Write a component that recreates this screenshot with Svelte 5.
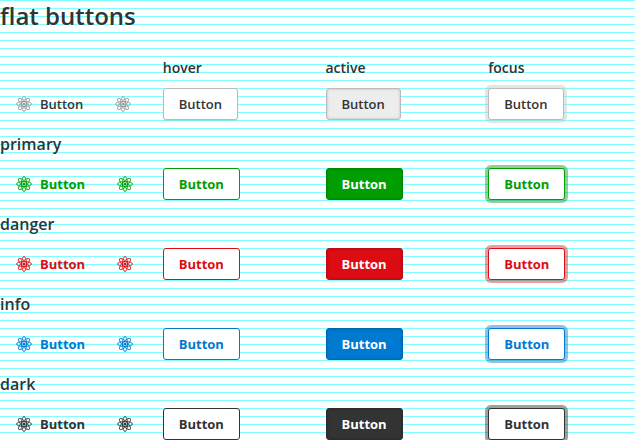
<script>
  const rows = [
    { name: '', kind: 'default' },
    { name: 'primary', kind: 'primary' },
    { name: 'danger', kind: 'danger' },
    { name: 'info', kind: 'info' },
    { name: 'dark', kind: 'dark' },
  ];
  const states = ['hover', 'active', 'focus'];
</script>

{#snippet atom()}
  <svg class="icon" viewBox="0 0 16 16" fill="none" stroke="currentColor" stroke-width="0.9">
    <ellipse cx="8" cy="8" rx="7.5" ry="2.5" />
    <ellipse cx="8" cy="8" rx="7.5" ry="2.5" transform="rotate(90 8 8)" />
    <ellipse cx="8" cy="8" rx="7.5" ry="2.5" transform="rotate(45 8 8)" />
    <ellipse cx="8" cy="8" rx="7.5" ry="2.5" transform="rotate(135 8 8)" />
    <circle cx="8" cy="8" r="1.5" fill="currentColor" stroke="none" />
  </svg>
{/snippet}

<main>
  <h1>flat buttons</h1>
  {#each rows as row}
    {#if row.name}
      <h2>{row.name}</h2>
    {:else}
      <div class="grid heads">
        <span></span>
        {#each states as state}<h3>{state}</h3>{/each}
      </div>
    {/if}
    <div class="grid {row.kind}">
      <div class="pair">
        <button>{@render atom()}<span>Button</span></button>
        <button aria-label="icon">{@render atom()}</button>
      </div>
      {#each states as state}
        <div><button class={state}>Button</button></div>
      {/each}
    </div>
  {/each}
</main>

<style>
  :global(body) {
    overflow: hidden;
  }
  main {
    height: 440px;
    overflow: hidden;
    color: #333;
    font-family: 'Open Sans', 'Noto Sans', sans-serif;
    background: repeating-linear-gradient(to bottom, #7fffff 0, #7fffff 1px, #fff 1px, #fff 8px);
  }
  h1, h2, h3 {
    margin: 0;
    font-weight: 600;
  }
  h1 {
    height: 56px;
    font-size: 24px;
    line-height: 32px;
  }
  h2 {
    height: 32px;
    margin-top: 16px;
    font-size: 16px;
    line-height: 16px;
  }
  h3 {
    font-size: 14px;
    line-height: 24px;
  }
  .grid {
    display: grid;
    grid-template-columns: repeat(4, 162.75px);
    height: 32px;
  }
  .pair {
    display: flex;
  }
  button {
    box-sizing: border-box;
    display: inline-flex;
    align-items: center;
    gap: 8px;
    height: 32px;
    margin: 0;
    padding: 0 15px;
    border: 1px solid transparent;
    border-radius: 3px;
    background: transparent;
    color: var(--c);
    font: 700 13px/30px 'Open Sans', 'Noto Sans', sans-serif;
    vertical-align: top;
  }
  .icon {
    flex: none;
    width: 16px;
    height: 16px;
  }
  .hover, .focus {
    background: #fff;
    border-color: var(--c);
  }
  .focus {
    box-shadow: 0 0 0 3px var(--ring);
  }
  .active {
    background: var(--c);
    border-color: var(--edge);
    color: #fff;
    box-shadow: inset 0 0 3px rgba(0, 0, 0, 0.2);
  }
  .default button {
    color: #333;
    font-weight: 600;
  }
  .default .icon {
    color: #999;
  }
  .default .hover, .default .focus, .default .active {
    border-color: #bbb;
  }
  .default .hover {
    box-shadow: 0 1px 2px rgba(0, 0, 0, 0.1);
  }
  .default .active {
    background: #ededed;
  }
  .default { --c: #333; --ring: rgba(190, 190, 190, 0.4); }
  .primary { --c: #009e00; --edge: #008600; --ring: rgba(0, 128, 0, 0.4); }
  .danger { --c: #dd0c12; --edge: #b80c10; --ring: rgba(196, 16, 16, 0.4); }
  .info { --c: #0079d0; --edge: #0066b0; --ring: rgba(0, 92, 172, 0.4); }
  .dark { --c: #333; --edge: #2b2b2b; --ring: rgba(20, 20, 20, 0.4); }
</style>
